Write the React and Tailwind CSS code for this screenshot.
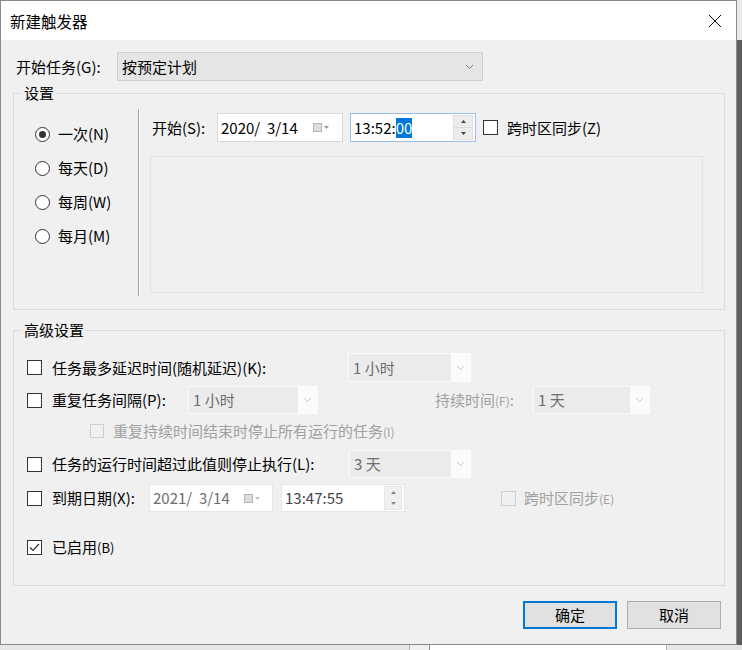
import React from "react";

const FONT = { fontFamily: '"Noto Sans CJK SC", "Microsoft YaHei", sans-serif' };

function Chevron({ color = "#7a7a7a" }) {
  return (
    <svg width="9" height="6" viewBox="0 0 9 6" className="shrink-0">
      <polyline points="1,1 4.5,4.5 8,1" fill="none" stroke={color} strokeWidth="1" />
    </svg>
  );
}

function Check({ checked = false, disabled = false, size = 15 }) {
  return (
    <div
      className={`shrink-0 flex items-center justify-center border ${
        disabled ? "border-[#cfcfcf] bg-[#f0f0f0]" : "border-[#333333] bg-white"
      }`}
      style={{ width: size, height: size }}
    >
      {checked && (
        <svg width="11" height="9" viewBox="0 0 11 9">
          <polyline points="1,4.5 4,7.5 10,1" fill="none" stroke="#333" strokeWidth="1.2" />
        </svg>
      )}
    </div>
  );
}

function Radio({ checked, label }) {
  return (
    <div className="h-[34px] flex items-center">
      <div className="w-[15px] h-[15px] rounded-full border border-[#333333] bg-white flex items-center justify-center shrink-0">
        {checked && <div className="w-[7px] h-[7px] rounded-full bg-[#333333]" />}
      </div>
      <span className="ml-[8px] text-[15px] leading-[20px] text-black">{label}</span>
    </div>
  );
}

function DisabledCombo({ w, text }) {
  return (
    <div className="flex h-full border border-[#fbfbfb] bg-[#fbfbfb]" style={{ width: w }}>
      <div className="flex-1 bg-[#ebebeb] flex items-center pl-[4px] text-[15px] text-[#6d6d6d] leading-[20px]">
        {text}
      </div>
      <div className="w-[19px] flex items-center justify-center">
        <Chevron color="#c4c4c4" />
      </div>
    </div>
  );
}

function CalIcon({ color = "#9a9a9a" }) {
  return (
    <div className="flex items-center gap-[2px]">
      <div className="w-[9px] h-[9px] border border-[#b5b5b5] bg-[#dcdcdc]" />
      <svg width="5" height="3" viewBox="0 0 5 3">
        <polygon points="0,0 5,0 2.5,3" fill={color} />
      </svg>
    </div>
  );
}

function Spinner() {
  return (
    <div className="w-[20px] h-[25px] flex flex-col border border-[#e0e0e0] bg-[#ececec]">
      <div className="flex-1 flex items-center justify-center border-b border-[#dadada]">
        <svg width="5" height="3" viewBox="0 0 5 3">
          <polygon points="0,3 5,3 2.5,0" fill="#444" />
        </svg>
      </div>
      <div className="flex-1 flex items-center justify-center">
        <svg width="5" height="3" viewBox="0 0 5 3">
          <polygon points="0,0 5,0 2.5,3" fill="#444" />
        </svg>
      </div>
    </div>
  );
}

export default function App() {
  return (
    <div className="w-[742px] h-[650px] bg-[#e6e6e6] flex flex-col overflow-hidden" style={FONT}>
      <div className="flex h-[645px]">
        <div className="w-[737px] h-[645px] border border-[#8a8a8a] flex flex-col bg-[#f0f0f0] shrink-0">
          {/* Title bar */}
          <div className="h-[39px] bg-white flex items-center justify-between pl-[9px] pr-[12px] shrink-0">
            <span className="text-[15.5px] leading-[20px] text-black">新建触发器</span>
            <svg width="14" height="14" viewBox="0 0 14 14" className="mr-[2px]">
              <line x1="1" y1="1" x2="13" y2="13" stroke="#111" strokeWidth="1" />
              <line x1="13" y1="1" x2="1" y2="13" stroke="#111" strokeWidth="1" />
            </svg>
          </div>

          {/* Body */}
          <div className="flex-1 flex flex-col">
            {/* 开始任务 */}
            <div className="flex items-center mt-[12px] h-[29px]">
              <span className="w-[116px] pl-[15px] text-[15px] leading-[20px] text-black shrink-0 whitespace-nowrap">
                开始任务(G):
              </span>
              <div className="w-[366px] h-[29px] bg-[#e5e5e5] border border-[#d0d0d0] flex items-center justify-between pl-[4px] pr-[8px]">
                <span className="text-[15px] leading-[20px] text-black">按预定计划</span>
                <Chevron />
              </div>
            </div>

            {/* 设置 */}
            <fieldset className="ml-[12px] mt-[2px] w-[712px] h-[227px] border border-[#dcdcdc] shrink-0">
              <legend className="ml-[8px] px-[2px] text-[15px] leading-[20px] text-black">设置</legend>
              <div className="flex h-[205px]">
                <div className="w-[124px] pl-[21px] pt-[14px] shrink-0">
                  <Radio checked label="一次(N)" />
                  <Radio label="每天(D)" />
                  <Radio label="每周(W)" />
                  <Radio label="每月(M)" />
                </div>
                <div className="mt-[6px] h-[187px] w-[2px] border-l border-[#a0a0a0] border-r border-r-white shrink-0" />
                <div className="pl-[10px] pt-[10px] flex flex-col">
                  <div className="flex items-center h-[29px]">
                    <span className="ml-[2px] text-[15px] leading-[20px] text-black w-[65px] shrink-0">开始(S):</span>
                    <div className="w-[126px] h-[29px] bg-white border border-[#d9d9d9] flex items-center justify-between pl-[3px] pr-[13px]">
                      <span className="text-[15px] leading-[20px] text-black">2020/&nbsp; 3/14</span>
                      <CalIcon />
                    </div>
                    <div className="ml-[7px] w-[126px] h-[29px] bg-white border border-[#99c0e8] flex items-center justify-between pl-[3px] pr-[2px]">
                      <span className="text-[15px] leading-[20px] text-black flex">
                        13:52:<span className="bg-[#0078d7] text-white">00</span>
                      </span>
                      <Spinner />
                    </div>
                    <div className="ml-[7px] flex items-center">
                      <Check />
                      <span className="ml-[9px] text-[15px] leading-[20px] text-black">跨时区同步(Z)</span>
                    </div>
                  </div>
                  <div className="mt-[14px] w-[553px] h-[137px] border border-[#e2e2e2]" />
                </div>
              </div>
            </fieldset>

            {/* 高级设置 */}
            <fieldset className="ml-[12px] mt-[10px] w-[712px] h-[266px] border border-[#dcdcdc] shrink-0">
              <legend className="ml-[8px] px-[2px] text-[15px] leading-[20px] text-black">高级设置</legend>
              <div className="flex flex-col pl-[13px]">
                {/* row 1 */}
                <div className="mt-[13px] h-[29px] flex items-center">
                  <div className="w-[321px] flex items-center shrink-0">
                    <Check />
                    <span className="ml-[10px] text-[15px] leading-[20px] text-black whitespace-nowrap">
                      任务最多延迟时间(随机延迟)(K):
                    </span>
                  </div>
                  <DisabledCombo w={123} text="1 小时" />
                </div>
                {/* row 2 */}
                <div className="mt-[4px] h-[28px] flex items-center">
                  <div className="w-[161px] flex items-center shrink-0">
                    <Check />
                    <span className="ml-[10px] text-[15px] leading-[20px] text-black whitespace-nowrap">重复任务间隔(P):</span>
                  </div>
                  <DisabledCombo w={130} text="1 小时" />
                  <span className="ml-[117px] w-[98px] shrink-0 text-[15px] leading-[20px] text-[#a0a0a0] whitespace-nowrap">
                    持续时间<span className="text-[12px]">(F)</span>:
                  </span>
                  <DisabledCombo w={117} text="1 天" />
                </div>
                {/* row 3 */}
                <div className="mt-[3px] h-[28px] flex items-center pl-[63px]">
                  <Check disabled size={14} />
                  <span className="ml-[9px] text-[15px] leading-[20px] text-[#a0a0a0] whitespace-nowrap">
                    重复持续时间结束时停止所有运行的任务<span className="text-[12px]">(I)</span>
                  </span>
                </div>
                {/* row 4 */}
                <div className="mt-[5px] h-[28px] flex items-center">
                  <div className="w-[322px] flex items-center shrink-0">
                    <Check />
                    <span className="ml-[10px] text-[15px] leading-[20px] text-black whitespace-nowrap">
                      任务的运行时间超过此值则停止执行(L):
                    </span>
                  </div>
                  <DisabledCombo w={122} text="3 天" />
                </div>
                {/* row 5 */}
                <div className="mt-[6px] h-[28px] flex items-center">
                  <div className="w-[122px] flex items-center shrink-0">
                    <Check />
                    <span className="ml-[10px] text-[15px] leading-[20px] text-black whitespace-nowrap">到期日期(X):</span>
                  </div>
                  <div className="w-[124px] h-full bg-white border border-[#e6e6e6] flex items-center justify-between pl-[3px] pr-[12px]">
                    <span className="text-[15px] leading-[20px] text-[#6d6d6d]">2021/&nbsp; 3/14</span>
                    <CalIcon color="#c0c0c0" />
                  </div>
                  <div className="ml-[8px] w-[124px] h-full bg-white border border-[#e6e6e6] flex items-center justify-between pl-[3px] pr-[2px]">
                    <span className="text-[15px] leading-[20px] text-[#444]">13:47:55</span>
                    <div className="w-[18px] h-[24px] flex flex-col bg-[#f0f0f0] border border-[#e6e6e6]">
                      <div className="flex-1 flex items-center justify-center">
                        <svg width="5" height="3" viewBox="0 0 5 3"><polygon points="0,3 5,3 2.5,0" fill="#888" /></svg>
                      </div>
                      <div className="flex-1 flex items-center justify-center">
                        <svg width="5" height="3" viewBox="0 0 5 3"><polygon points="0,0 5,0 2.5,3" fill="#888" /></svg>
                      </div>
                    </div>
                  </div>
                  <div className="ml-[96px] flex items-center">
                    <Check disabled />
                    <span className="ml-[8px] text-[15px] leading-[20px] text-[#a0a0a0] whitespace-nowrap">
                      跨时区同步<span className="text-[12px]">(E)</span>
                    </span>
                  </div>
                </div>
                {/* row 6 */}
                <div className="mt-[21px] h-[28px] flex items-center">
                  <Check checked />
                  <span className="ml-[10px] text-[15px] leading-[20px] text-black whitespace-nowrap">
                    已启用<span className="text-[13px]">(B)</span>
                  </span>
                </div>
              </div>
            </fieldset>

            {/* Buttons */}
            <div className="mt-[15px] flex justify-end gap-[10px] pr-[15px]">
              <button className="w-[94px] h-[28px] bg-[#e1e1e1] border-2 border-[#0078d7] text-[15px] leading-[20px] text-black">
                确定
              </button>
              <button className="w-[94px] h-[28px] bg-[#e1e1e1] border border-[#adadad] text-[15px] leading-[20px] text-black">
                取消
              </button>
            </div>
          </div>
        </div>
        <div className="flex-1 flex flex-col">
          <div className="h-[40px] bg-[#e9e9e9]" />
          <div className="flex-1 bg-[#5e5e5e]" />
        </div>
      </div>
      <div className="flex-1 flex">
        <div className="w-[410px] bg-[#e6e6e6] border-r border-[#b5b5b5]" />
        <div className="w-[20px] bg-[#f0f0f0] border-r border-[#8a8a8a]" />
        <div className="w-[237px] bg-white border-r border-[#b5b5b5]" />
        <div className="flex-1 bg-[#e6e6e6]" />
      </div>
    </div>
  );
}
